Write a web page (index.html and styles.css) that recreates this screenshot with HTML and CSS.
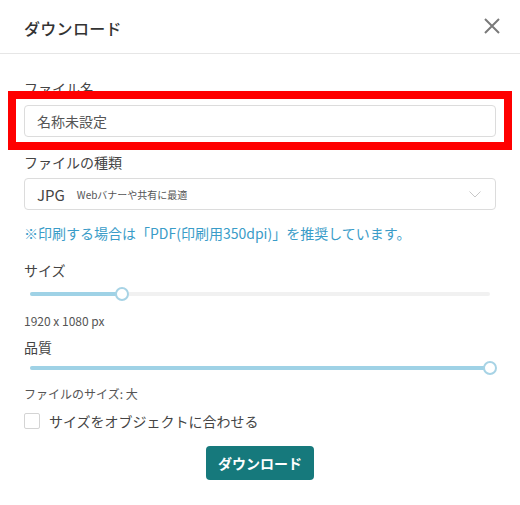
FILE: index.html
```html
<!DOCTYPE html>
<html lang="ja">
<head>
<meta charset="utf-8">
<link rel="stylesheet" href="styles.css">
</head>
<body>
<div class="dialog">
  <div class="header">
    <div class="title">ダウンロード</div>
    <svg class="close" width="16" height="16" viewBox="0 0 16 16"><path d="M1 1L15 15M15 1L1 15" stroke="#7a7a7a" stroke-width="2" fill="none"/></svg>
  </div>
  <div class="body">
    <div class="label l-name">ファイル名</div>
    <div class="input">名称未設定</div>
    <div class="label l-type">ファイルの種類</div>
    <div class="select">
      <span class="fmt">JPG</span><span class="fmt-desc">Webバナーや共有に最適</span>
      <svg class="chev" width="12" height="7" viewBox="0 0 12 7"><path d="M0.5 0.5L6 6L11.5 0.5" stroke="#c8c8c8" stroke-width="1" fill="none"/></svg>
    </div>
    <div class="note">※印刷する場合は「PDF(印刷用350dpi)」を推奨しています。</div>
    <div class="label l-size">サイズ</div>
    <div class="slider s1">
      <div class="track"><div class="fill" style="width:20%"></div></div>
      <div class="thumb" style="left:20%"></div>
    </div>
    <div class="small px">1920 x 1080 px</div>
    <div class="label l-q">品質</div>
    <div class="slider s2">
      <div class="track"><div class="fill" style="width:100%"></div></div>
      <div class="thumb" style="left:100%"></div>
    </div>
    <div class="small fsize">ファイルのサイズ: 大</div>
    <label class="check"><span class="box"></span><span>サイズをオブジェクトに合わせる</span></label>
    <div class="actions"><button class="btn">ダウンロード</button></div>
  </div>
  <div class="highlight"></div>
</div>
</body>
</html>
```
FILE: styles.css
```css
html, body {
  margin: 0;
  padding: 0;
  background: #ffffff;
}
body {
  font-family: "Noto Sans CJK JP", "Noto Sans", sans-serif;
  color: #333;
}
.dialog {
  position: relative;
  width: 520px;
  height: 505px;
  box-sizing: border-box;
}
.header {
  border-bottom: 1px solid #e6e6e6;
  display: flex;
  align-items: center;
  justify-content: space-between;
  padding: 2px 20px 0 24px;
  height: 51px;
}
.title {
  font-size: 16px;
  font-weight: 500;
  color: #333;
  letter-spacing: 0.3px;
}
.close {
  margin-top: -4px;
}
.body {
  padding: 0 24px;
  display: flex;
  flex-direction: column;
}
.label {
  font-size: 14px;
  line-height: 20px;
  color: #444;
}
.l-name { margin-top: 24px; }
.input {
  margin-top: 7px;
  height: 32px;
  box-sizing: border-box;
  border: 1px solid #dcdcdc;
  border-radius: 4px;
  padding: 0 12px;
  display: flex;
  align-items: center;
  font-size: 14px;
  color: #555;
}
.l-type { margin-top: 15px; }
.select {
  margin-top: 6px;
  height: 32px;
  box-sizing: border-box;
  border: 1px solid #dcdcdc;
  border-radius: 4px;
  padding: 0 12px;
  display: flex;
  align-items: center;
}
.fmt {
  font-size: 15px;
  color: #444;
  margin-right: 12px;
}
.fmt-desc {
  font-size: 10px;
  color: #555;
  flex: 1;
}
.chev {
  margin-right: 2px;
}
.note {
  margin-top: 13px;
  font-size: 14px;
  line-height: 20px;
  color: #3a9cc8;
}
.l-size { margin-top: 17px; }
.slider {
  position: relative;
  height: 16px;
  margin: 6px 6px 0 6px;
}
.track {
  position: absolute;
  left: 0;
  right: 0;
  top: 6px;
  height: 4px;
  border-radius: 2px;
  background: #f1f1f1;
}
.fill {
  height: 100%;
  border-radius: 2px;
  background: #9fd2e6;
}
.thumb {
  position: absolute;
  top: 1px;
  width: 14px;
  height: 14px;
  margin-left: -7px;
  box-sizing: border-box;
  border-radius: 50%;
  border: 2px solid #a7d3e5;
  background: #fff;
}
.small {
  font-size: 12px;
  line-height: 18px;
  color: #555;
}
.px { margin-top: 10px; }
.l-q { margin-top: 7px; }
.s2 { margin-top: 3px; }
.fsize { margin-top: 9px; }
.check {
  margin-top: 8px;
  height: 20px;
  display: flex;
  align-items: center;
  font-size: 14px;
  color: #444;
}
.box {
  width: 16px;
  height: 16px;
  box-sizing: border-box;
  border: 1px solid #d4d4d4;
  border-radius: 2px;
  margin-right: 9px;
}
.actions {
  margin-top: 15px;
  display: flex;
  justify-content: center;
}
.btn {
  width: 108px;
  height: 34px;
  border: none;
  border-radius: 4px;
  background: #16797c;
  color: #fff;
  font-family: "Noto Sans CJK JP", sans-serif;
  font-size: 14px;
  font-weight: 700;
  padding: 0;
}
.highlight {
  position: absolute;
  left: 8px;
  top: 91px;
  width: 504px;
  height: 59px;
  box-sizing: border-box;
  border: 8px solid #ff0000;
}
```
